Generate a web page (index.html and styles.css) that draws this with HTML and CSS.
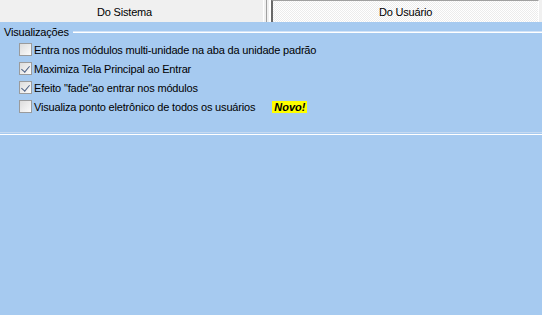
FILE: index.html
```html
<!DOCTYPE html>
<html lang="pt-br">

<head>
    <meta charset="UTF-8">
    <title>Configurações</title>
    <link rel="stylesheet" href="styles.css">
</head>

<body>
    <div class="abas">
        <div class="aba aba-sistema">Do Sistema</div>
        <div class="divisor"></div>
        <div class="aba aba-usuario">Do Usuário</div>
    </div>

    <div class="grupo">
        <div class="legenda">
            <span>Visualizações</span>
            <span class="linha"></span>
        </div>

        <div class="opcoes">
            <label class="opcao"><span class="caixa"></span>Entra nos módulos multi-unidade na aba da unidade padrão</label>
            <label class="opcao"><span class="caixa marcada"></span>Maximiza Tela Principal ao Entrar</label>
            <label class="opcao"><span class="caixa marcada"></span>Efeito "fade"ao entrar nos módulos</label>
            <label class="opcao"><span class="caixa"></span>Visualiza ponto eletrônico de todos os usuários<span class="novo">Novo!</span></label>
        </div>
    </div>
</body>

</html>
```

FILE: styles.css
```css
* {
    margin: 0;
    padding: 0;
    box-sizing: border-box;
}

body {
    font-family: 'Liberation Sans', Arial, sans-serif;
    font-size: 11px;
    letter-spacing: -0.18px;
    color: #000;
    background-color: #a6caf0;
    width: 542px;
    height: 315px;
    overflow: hidden;
}

/* abas */
.abas {
    display: flex;
    height: 22px;
    background-color: #f0f0f0;
}

.aba {
    display: flex;
    align-items: center;
    justify-content: center;
}

.aba-sistema {
    width: 263px;
    padding-right: 14px;
    padding-top: 1px;
}

.divisor {
    width: 8px;
    border-left: 1px solid #ffffff;
    border-right: 2px solid #ffffff;
    position: relative;
}

.divisor::after {
    content: "";
    position: absolute;
    left: 2px;
    top: 0;
    bottom: 0;
    width: 1px;
    background-color: #a0a0a0;
}

.aba-usuario {
    flex: 1;
    margin-right: 3px;
    border-left: 2px solid #696969;
    border-top: 1px solid #a0a0a0;
    border-right: 1px solid #ffffff;
    background-color: #f7f7f7;
    background-image: repeating-conic-gradient(#ffffff 0 25%, #ececec 0 50%);
    background-size: 2px 2px;
    padding-top: 1px;
}

/* grupo */
.grupo {
    height: 113px;
    padding-top: 3px;
    border-bottom: 1px solid #ffffff;
    position: relative;
}

.grupo::before {
    content: "";
    position: absolute;
    left: 0;
    right: 0;
    bottom: 1px;
    height: 1px;
    background-color: #c6daf2;
}

.legenda {
    display: flex;
    align-items: center;
    padding-left: 4px;
    height: 13px;
}

.linha {
    flex: 1;
    height: 2px;
    margin-left: 4px;
    border-top: 1px solid #d2e3f7;
    border-bottom: 1px solid #ffffff;
}

.opcoes {
    display: flex;
    flex-direction: column;
    padding-left: 19px;
    padding-top: 2px;
}

.opcao {
    display: flex;
    align-items: center;
    height: 19px;
}

.caixa {
    width: 13px;
    height: 13px;
    margin-right: 2px;
    border: 1px solid #9a9b9c;
    background: linear-gradient(135deg, #dcdcdc, #fbfbfb);
    position: relative;
}

.caixa.marcada::after {
    content: "";
    position: absolute;
    left: 3px;
    top: 1px;
    width: 4px;
    height: 7px;
    border-right: 1.5px solid #4d6185;
    border-bottom: 1.5px solid #4d6185;
    transform: rotate(40deg);
}

.novo {
    margin-left: 17px;
    padding: 0 2px;
    background-color: #ffff00;
    font-weight: bold;
    font-style: italic;
    line-height: 12px;
    letter-spacing: 0;
}
```
